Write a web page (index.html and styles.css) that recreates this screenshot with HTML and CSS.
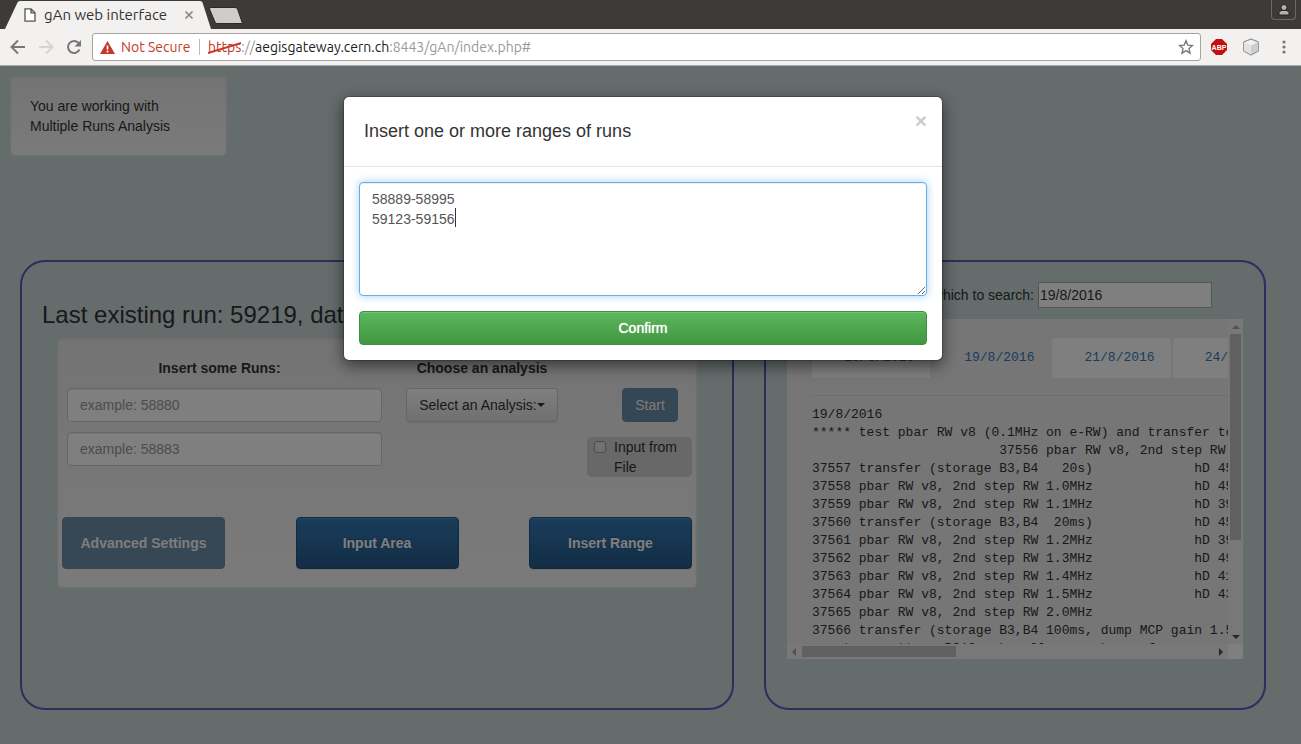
FILE: index.html
```html
<!DOCTYPE html>
<html lang="en">
<head>
<meta charset="utf-8">
<title>gAn web interface</title>
<link rel="stylesheet" href="styles.css">
</head>
<body>
<header class="browser">
  <div class="tabstrip">
    <svg class="tab-shape" width="250" height="29" viewBox="0 0 250 29" aria-hidden="true">
      <path d="M5 29 L17.500 2.500 Q18 1 20 1 H200 Q202 1 202.500 2.500 L211 29 Z" fill="#f2f1f0"/>
      <path d="M211 7.500 H235 Q237 7.500 237.500 9 L242.500 23.500 H217 Q215.500 23.500 215 22 L209.500 9 Q209 7.500 211 7.500 Z" fill="#cfcdca" stroke="#2a2926"/>
    </svg>
    <div class="tab-title">
      <svg width="12" height="14" viewBox="0 0 12 14" aria-hidden="true"><path d="M1 .8h6l4 4v8.400H1zM7 .8v4h4" fill="#fff" stroke="#555" stroke-width="1.300"/></svg>
      <span class="tab-name">gAn web interface</span>
      <svg width="10" height="10" viewBox="0 0 10 10" aria-hidden="true"><path d="M1.500 1.500l7 7M8.500 1.500l-7 7" stroke="#888" stroke-width="1.700"/></svg>
    </div>
    <button class="profile" aria-label="Profile"><svg width="12" height="12" viewBox="0 0 12 12"><path d="M1 11V8.500Q1.500 6.500 4 6.500h4Q10.500 6.500 11 8.500V11z" fill="#b5b3ae" stroke="#222"/><circle cx="6" cy="3.500" r="3" fill="#b5b3ae" stroke="#222"/></svg></button>
  </div>
  <div class="toolbar">
    <button class="tool" aria-label="Back"><svg width="16" height="16" viewBox="0 0 16 16"><path d="M15 8H2M8 1.500L1.500 8 8 14.500" fill="none" stroke="#777" stroke-width="2"/></svg></button>
    <button class="tool" aria-label="Forward"><svg width="16" height="16" viewBox="0 0 16 16"><path d="M1 8h13M8 1.500L14.500 8 8 14.500" fill="none" stroke="#d6d5d3" stroke-width="2"/></svg></button>
    <button class="tool" aria-label="Reload"><svg width="16" height="16" viewBox="0 0 16 16"><path d="M13.500 10.500A6 6 0 1 1 12.500 4" fill="none" stroke="#777" stroke-width="2"/><path d="M15 1v6.500H8.500z" fill="#777"/></svg></button>
    <div class="address">
      <svg width="15" height="13" viewBox="0 0 15 13" aria-hidden="true"><path d="M7.500 0L15 13H0z" fill="#c53929"/><path d="M7.500 4.500v4M7.500 9.500v2" stroke="#fff" stroke-width="1.600"/></svg>
      <span class="warn">Not Secure</span>
      <span class="divider"></span>
      <span class="url"><span class="scheme">https<svg viewBox="0 0 34 12" preserveAspectRatio="none" aria-hidden="true"><path d="M0 11L34 1" stroke="#c53929" stroke-width="2"/></svg></span>://<b>aegisgateway.cern.ch</b>:8443/gAn/index.php#</span>
      <svg class="star" width="16" height="16" viewBox="0 0 16 16" aria-hidden="true"><path d="M8 1.800l1.800 4.300 4.700.4-3.500 3.100 1 4.600-4-2.500-4 2.500 1-4.600L1.500 6.500l4.700-.4z" fill="none" stroke="#777" stroke-width="1.400"/></svg>
    </div>
    <div class="extensions">
      <svg width="16" height="16" viewBox="0 0 16 16" aria-label="ABP"><path d="M5 0h6l5 5v6l-5 5H5l-5-5V5z" fill="#c70d0d"/><text x="8" y="11" class="abp">ABP</text></svg>
      <svg width="18" height="18" viewBox="0 0 18 18" aria-hidden="true"><path d="M9 1l7.500 3v9L9 17l-7.500-4V4z" fill="#f0f0f0" stroke="#999"/><path d="M1.500 4L9 7.500V17l-7.500-4z" fill="#e2e2e2"/><path d="M9 7.500L16.500 4v9L9 17z" fill="#cdcdcd"/><path d="M9 1l7.500 3v9L9 17l-7.500-4V4z" fill="none" stroke="#999"/></svg>
      <svg width="4" height="14" viewBox="0 0 4 14" aria-hidden="true"><g fill="#777"><circle cx="2" cy="2" r="1.600"/><circle cx="2" cy="7" r="1.600"/><circle cx="2" cy="12" r="1.600"/></g></svg>
    </div>
  </div>
</header>

<div class="page">
  <main class="content">
    <div class="well status">You are working with<br>Multiple Runs Analysis</div>
    <div class="panels">
      <section class="panel runs">
        <h3 class="last-run">Last existing run: 59219, date: 19/8/2016</h3>
        <form class="well run-form">
          <div class="fields">
            <div class="col">
              <label class="caption" for="first">Insert some Runs:</label>
              <input class="control" id="first" placeholder="example: 58880">
              <input class="control" id="last" placeholder="example: 58883" aria-label="Last run">
            </div>
            <div class="col analysis">
              <span class="caption">Choose an analysis</span>
              <button type="button" class="dropdown">Select an Analysis:<span class="caret-down"></span></button>
            </div>
            <div class="col start-col">
              <button type="button" class="btn start" disabled>Start</button>
              <label class="file-input"><input type="checkbox"><span>Input from File</span></label>
            </div>
          </div>
          <div class="actions">
            <button type="button" class="btn big" disabled>Advanced Settings</button>
            <button type="button" class="btn big">Input Area</button>
            <button type="button" class="btn big">Insert Range</button>
          </div>
        </form>
      </section>
      <section class="panel log">
        <div class="search"><label for="date">Date from which to search:</label><input id="date" value="19/8/2016"></div>
        <div class="viewer">
          <div class="viewer-body">
            <nav class="dates">
              <a href="#">18/8/2016</a><a href="#" class="active">19/8/2016</a><a href="#">21/8/2016</a><a href="#">24/8/2016</a>
            </nav>
            <hr>
<pre>19/8/2016
***** test pbar RW v8 (0.1MHz on e-RW) and transfer to
                        37556 pbar RW v8, 2nd step RW
37557 transfer (storage B3,B4   20s)             hD 45
37558 pbar RW v8, 2nd step RW 1.0MHz             hD 45
37559 pbar RW v8, 2nd step RW 1.1MHz             hD 39
37560 transfer (storage B3,B4  20ms)             hD 45
37561 pbar RW v8, 2nd step RW 1.2MHz             hD 39
37562 pbar RW v8, 2nd step RW 1.3MHz             hD 49
37563 pbar RW v8, 2nd step RW 1.4MHz             hD 41
37564 pbar RW v8, 2nd step RW 1.5MHz             hD 43
37565 pbar RW v8, 2nd step RW 2.0MHz
37566 transfer (storage B3,B4 100ms, dump MCP gain 1.5
reset   scatter  PS12 a be all as so bar  of</pre>
          </div>
          <div class="vbar"><i class="arrow up"></i><i class="thumb"></i><i class="arrow down"></i></div>
          <div class="hbar"><i class="arrow left"></i><i class="thumb"></i><i class="arrow right"></i></div>
          <div class="corner"></div>
        </div>
      </section>
    </div>
  </main>
  <div class="backdrop">
    <div class="modal" role="dialog" aria-labelledby="modal-title">
      <div class="modal-header">
        <h4 id="modal-title">Insert one or more ranges of runs</h4>
        <button class="close" aria-label="Close">×</button>
      </div>
      <form class="modal-body">
        <div class="area"><textarea aria-label="Ranges of runs">58889-58995
59123-59156</textarea><span class="text-caret"></span></div>
        <button type="button" class="confirm">Confirm</button>
      </form>
    </div>
  </div>
</div>
</body>
</html>
```
FILE: styles.css
```css
* { box-sizing: border-box; }
body {
  margin: 0;
  height: 100vh;
  display: flex;
  flex-direction: column;
  font: 14px/20px "Liberation Sans", Arial, sans-serif;
  color: #333;
  overflow: hidden;
}
button, input, textarea { font: inherit; color: inherit; }

/* Browser frame */
.browser { flex: none; font-family: Ubuntu, "Noto Sans", sans-serif; }
.tabstrip {
  height: 29px;
  background: #3c3b37;
  display: flex;
  justify-content: space-between;
  padding-right: 5px;
  position: relative;
}
.tab-shape { position: absolute; left: 0; top: 0; }
.tab-title {
  position: relative;
  display: flex;
  align-items: center;
  gap: 8px;
  padding-left: 24px;
  height: 30px;
}
.tab-name { width: 132px; font-size: 15px; white-space: nowrap; }
.profile {
  width: 25px;
  height: 20px;
  padding: 0;
  background: #3c3b37;
  border: 1px solid #6b6964;
  border-top: 0;
  border-radius: 0 0 4px 4px;
  display: flex;
  justify-content: center;
  align-items: center;
}
.profile svg { flex: none; }
.toolbar {
  height: 37px;
  background: #f2f1f0;
  border-bottom: 1px solid #aaa;
  display: flex;
  align-items: center;
  padding: 0 15px 0 10px;
}
.tool { border: 0; background: none; padding: 0; width: 28px; height: 16px; display: flex; }
.tool svg { flex: none; }
.address {
  flex: 1;
  height: 28px;
  margin-right: 10px;
  margin-left: -2px;
  background: #fff;
  border: 1px solid #a5a4a2;
  border-radius: 3px;
  display: flex;
  align-items: center;
  padding: 0 6px 0 7px;
}
.warn { color: #c53929; margin-left: 6px; width: 78px; white-space: nowrap; }
.divider { width: 1px; height: 16px; background: #bbb; margin-right: 8px; }
.url { color: #999; white-space: nowrap; }
.url b { font-weight: normal; color: #222; }
.scheme { color: #c53929; position: relative; }
.scheme svg { position: absolute; left: 0; top: 3px; width: 100%; height: 12px; }
.star { margin-left: auto; }
.extensions { display: flex; align-items: center; gap: 15px; }
.extensions svg:last-child { margin-left: 7px; }
.abp { font: bold 7px "Liberation Sans", sans-serif; fill: #fff; text-anchor: middle; }

/* Page */
.page { flex: 1; position: relative; overflow: hidden; background: #c8d8d9; }
.content { padding: 10px 35px 0 20px; }
.well {
  border: 1px solid #dcdcdc;
  border-radius: 4px;
  background: linear-gradient(#e8e8e8, #f5f5f5);
  box-shadow: inset 0 1px 3px rgba(0,0,0,.05), 0 1px 0 rgba(255,255,255,.1);
}
.status { width: 217px; padding: 19px; margin: 0 0 104px -10px; }
.panels { display: grid; grid-template-columns: 714fr 502fr; gap: 30px; }
.panel { border: 2px solid #5a5abe; border-radius: 25px; height: 450px; }
.runs { padding: 39px 35px 0; }
.last-run { margin: 0 0 9px -15px; font-size: 24px; line-height: 28px; font-weight: normal; white-space: nowrap; }
.run-form { height: 250px; padding: 19px 4px; display: flex; flex-direction: column; }
.fields { display: flex; height: 159px; flex: none; padding-left: 5px; }
.col { width: 315px; display: flex; flex-direction: column; gap: 10px; }
.caption { font-weight: bold; text-align: center; line-height: 20px; margin-right: 10px; }
.analysis .caption { margin-right: 0; }
.analysis { width: 152px; margin-left: 24px; }
.control {
  height: 34px;
  padding: 6px 12px;
  border: 1px solid #ccc;
  border-radius: 4px;
  background: #fff;
  box-shadow: inset 0 1px 1px rgba(0,0,0,.075);
}
.control::placeholder { color: #999; }
.dropdown {
  height: 34px;
  padding: 0;
  border: 1px solid #ccc;
  border-radius: 4px;
  background: linear-gradient(#fff, #e0e0e0);
  box-shadow: 0 1px 1px rgba(0,0,0,.075);
  display: flex;
  align-items: center;
  justify-content: center;
  white-space: nowrap;
}
.caret-down { border: 4px solid transparent; border-top-color: #333; border-bottom: 0; }
.start-col { width: 105px; margin-left: auto; padding-top: 30px; gap: 15px; }
.btn {
  border: 1px solid #245580;
  border-radius: 4px;
  color: #fff;
  background: linear-gradient(#337ab7, #265a88);
  box-shadow: inset 0 1px 0 rgba(255,255,255,.15), 0 1px 1px rgba(0,0,0,.075);
  text-shadow: 0 -1px 0 rgba(0,0,0,.2);
}
.btn:disabled { background: #265a88; opacity: .65; box-shadow: none; }
.start { height: 34px; width: 56px; margin-left: 35px; padding: 0; }
.file-input { display: flex; background: #d0d0d0; border-radius: 5px; padding-left: 7px; gap: 8px; }
.file-input input { appearance: none; width: 12px; height: 12px; margin: 4px 0 0; border: 1px solid #999; border-radius: 3px; background: #e2e2e2; flex: none; }
.actions { display: flex; justify-content: space-between; }
.big { width: 163px; height: 52px; font-weight: bold; }

.log { padding: 20px 21px 0; }
.search { display: flex; justify-content: flex-end; align-items: center; gap: 4px; padding-right: 31px; white-space: nowrap; }
.search input { width: 174px; height: 26px; padding: 1px; background: #fff; border: 1px solid #aaa; }
.viewer {
  height: 340px;
  margin-top: 11px;
  display: grid;
  grid-template: minmax(0, 1fr) 15px / minmax(0, 1fr) 15px;
  background: #ececec;
}
.viewer-body { overflow: hidden; padding: 19px 0 0 25px; font: 13px/18px "Liberation Mono", monospace; }
.dates { display: flex; gap: 2px; }
.dates a { flex: none; padding: 11px 16px 11px 32px; background: #fff; color: #337ab7; text-decoration: none; border-radius: 4px 4px 0 0; }
.dates .active { background: none; }
.viewer hr { border: 0; border-top: 1px solid #ddd; margin: 17px 0 10px; }
.viewer pre { margin: 0; font: inherit; }
.vbar, .hbar { background: #f1f1f1; display: flex; align-items: center; justify-content: space-between; }
.vbar { flex-direction: column; padding: 6px 0 5px; }
.hbar { padding: 0 5px; }
.corner { background: #fff; }
.thumb { background: #c1c1c1; }
.vbar .thumb { width: 11px; height: 206px; margin: 5px 0 auto; }
.hbar .thumb { height: 11px; width: 154px; margin: 0 auto 0 6px; }
.arrow { border: 4px solid transparent; }
.up { border-top: 0; border-bottom-color: #a3a3a3; }
.down { border-bottom: 0; border-top-color: #505050; }
.left { border-left: 0; border-right-color: #a3a3a3; }
.right { border-right: 0; border-left-color: #505050; }

/* Modal */
.backdrop { position: absolute; inset: 0; background: rgba(0,0,0,.5); padding: 30px 15px 0 0; }
.modal {
  width: 600px;
  margin: 0 auto;
  background: #fff;
  background-clip: padding-box;
  border: 1px solid rgba(0,0,0,.2);
  border-radius: 6px;
  box-shadow: 0 5px 15px rgba(0,0,0,.5);
}
.modal-header { display: flex; justify-content: space-between; align-items: flex-start; padding: 14px 15px 14px 20px; height: 70px; border-bottom: 1px solid #e5e5e5; }
.modal-header h4 { margin: 10px 0 0; font-size: 18px; line-height: 20px; font-weight: normal; }
.close { border: 0; background: none; padding: 0; font-size: 21px; font-weight: bold; line-height: 20px; color: #ccc; }
.modal-body { padding: 15px; }
.area { position: relative; display: flex; margin-bottom: 15px; }
.area textarea {
  width: 100%;
  height: 114px;
  padding: 6px 12px;
  color: #555;
  border: 1px solid #66afe9;
  border-radius: 4px;
  outline: 0;
  resize: vertical;
  box-shadow: inset 0 1px 1px rgba(0,0,0,.075), 0 0 8px rgba(102,175,233,.6);
}
.text-caret { position: absolute; left: 96px; top: 26px; width: 1px; height: 19px; background: #333; }
.confirm {
  width: 100%;
  height: 34px;
  padding: 0;
  color: #fff;
  border: 1px solid #3e8f3e;
  border-radius: 4px;
  background: linear-gradient(#5cb85c, #419641);
  box-shadow: inset 0 1px 0 rgba(255,255,255,.15);
  text-shadow: 0 0 1px #fff;
}
```
